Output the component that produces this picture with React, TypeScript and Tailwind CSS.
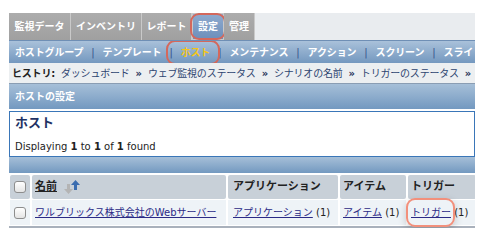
const font = { fontFamily: '"DejaVu Sans", "Noto Sans CJK JP", sans-serif' };

const tabs = [
  { label: "監視データ", w: "w-[62px]" },
  { label: "インベントリ", w: "w-[71px]" },
  { label: "レポート", w: "w-[50px]" },
  { label: "設定", w: "w-[32px]", active: true },
  { label: "管理", w: "w-[31px]" },
];

const subs = ["ホストグループ", "テンプレート", "ホスト", "メンテナンス", "アクション", "スクリーン", "スライドショー"];

const history = ["ダッシュボード", "ウェブ監視のステータス", "シナリオの名前", "トリガーのステータス"];

function Ring({ className }: { className: string }) {
  return <span className={`pointer-events-none absolute rounded-[9px] border-2 ${className}`} />;
}

function SortArrows() {
  return (
    <svg width="17" height="14" viewBox="0 0 17 14" className="ml-[6px]">
      <path d="M4 4h3v5h3l-4.5 5L1 9h3z" fill="#b4b4b4" />
      <path d="M11 10h3V5h3l-4.5-5L8 5h3z" fill="#3b6db0" />
    </svg>
  );
}

function Checkbox() {
  return <span className="block h-[12px] w-[12px] rounded-[3px] border border-[#8d8d8d] bg-gradient-to-b from-white to-[#e4e4e4]" />;
}

export default function App() {
  return (
    <div className="h-[248px] w-[484px] overflow-hidden bg-white pt-[13px] pl-[9px]" style={font}>
      <div className="w-[466px] overflow-hidden">
        {/* top tabs */}
        <div className="flex h-[27px] bg-[#e9ecef]">
          {tabs.map((t) => (
            <div key={t.label} className={`relative flex ${t.w} shrink-0 items-center justify-center border-r border-[#c9c9c9] text-[10px] font-bold text-white ${t.active ? "border border-[#4f86c6] bg-gradient-to-b from-[#8fabcf] to-[#6d8fbb]" : "bg-gradient-to-b from-[#acacac] to-[#a0a0a0]"}`}>
              {t.label}
              {t.active && <Ring className="-inset-x-[3px] -inset-y-[1px] border-[#d4685c]" />}
            </div>
          ))}
        </div>

        {/* sub nav */}
        <div className="flex h-[23px] items-center gap-[8px] overflow-hidden whitespace-nowrap border-t border-[#6f8fb5] bg-gradient-to-b from-[#a9c1da] to-[#7498bf] pl-[6px] text-[10px] font-bold tracking-[-0.15px] text-white">
          {subs.map((s, i) => (
            <div key={s} className="flex shrink-0 items-center gap-[8px]">
              {i > 0 && <span className="font-normal text-[#34508a]">|</span>}
              <span className={s === "ホスト" ? "relative text-[#f5c518]" : ""}>
                {s}
                {s === "ホスト" && <Ring className="-left-[15px] -right-[10px] -top-[5px] -bottom-[5px] border-[#d4685c]" />}
              </span>
            </div>
          ))}
        </div>

        {/* history */}
        <div className="flex h-[20px] items-center gap-[6px] overflow-hidden whitespace-nowrap bg-[#eceff1] pl-[3px] text-[10px] tracking-[-0.2px] text-[#2d4470]">
          <span className="font-bold text-[#222]">ヒストリ:</span>
          {history.map((h) => (
            <span key={h} className="flex shrink-0 items-center gap-[6px]">
              {h}
              <span className="font-bold text-[#1c2f55]">»</span>
            </span>
          ))}
        </div>

        {/* section header */}
        <div className="flex h-[26px] items-center border-t border-[#8a9db3] bg-gradient-to-b from-[#a6bfd8] to-[#7399c0] px-[6px] text-[10px] font-bold text-white">
          ホストの設定
        </div>

        <div className="mt-[2px] border border-[#3a76b8] bg-white px-[5px] pt-[2px] pb-[3px]">
          <div className="text-[13px] font-bold leading-[18px] text-[#1e3264]">ホスト</div>
          <div className="mt-[8px] text-[10px] leading-[13px] text-[#222]">
            Displaying <b>1</b> to <b>1</b> of <b>1</b> found
          </div>
        </div>
        <div className="h-[16px] bg-gradient-to-b from-[#a6bfd8] to-[#7399c0]" />

        {/* table */}
        <div className="mt-[2px] grid grid-cols-[20px_194px_110px_66px_68px] gap-x-[2px] gap-y-[1px] pl-[1px] text-[10px] text-[#222]">
          <div className="flex h-[24px] items-center justify-center rounded-[2px] bg-[#c8d0d8]"><Checkbox /></div>
          <div className="flex h-[24px] items-center rounded-[2px] bg-[#c8d0d8] pl-[3px] text-[11px] font-bold">
            <span className="underline">名前</span>
            <SortArrows />
          </div>
          <div className="flex h-[24px] items-center rounded-[2px] bg-[#c8d0d8] pl-[5px] text-[11px] font-bold">アプリケーション</div>
          <div className="flex h-[24px] items-center rounded-[2px] bg-[#c8d0d8] pl-[3px] text-[11px] font-bold">アイテム</div>
          <div className="flex h-[24px] items-center rounded-[2px] bg-[#c8d0d8] pl-[3px] text-[11px] font-bold">トリガー</div>

          <div className="flex h-[25px] items-center justify-center bg-[#eef3f7]"><Checkbox /></div>
          <div className="flex h-[25px] items-center bg-[#eef3f7] pl-[3px]">
            <a className="text-[#2b2a86] underline">ワルブリックス株式会社のWebサーバー</a>
          </div>
          <div className="flex h-[25px] items-center bg-[#eef3f7] pl-[5px]">
            <a className="text-[#2b2a86] underline">アプリケーション</a>&nbsp;(1)
          </div>
          <div className="flex h-[25px] items-center bg-[#eef3f7] pl-[3px]">
            <a className="text-[#2b2a86] underline">アイテム</a>&nbsp;(1)
          </div>
          <div className="flex h-[25px] items-center bg-[#eef3f7] pl-[3px]">
            <span className="relative">
              <a className="text-[#2b2a86] underline">トリガー</a>
              <Ring className="-left-[5px] -right-[4px] -top-[7px] -bottom-[7px] border-[#f2907c] shadow-[0_3px_8px_rgba(0,0,0,0.18)]" />
            </span>
            &nbsp;(1)
          </div>
        </div>
        <div className="mt-[1px] h-[2px] bg-[#a9b1bc]" />
      </div>
    </div>
  );
}
